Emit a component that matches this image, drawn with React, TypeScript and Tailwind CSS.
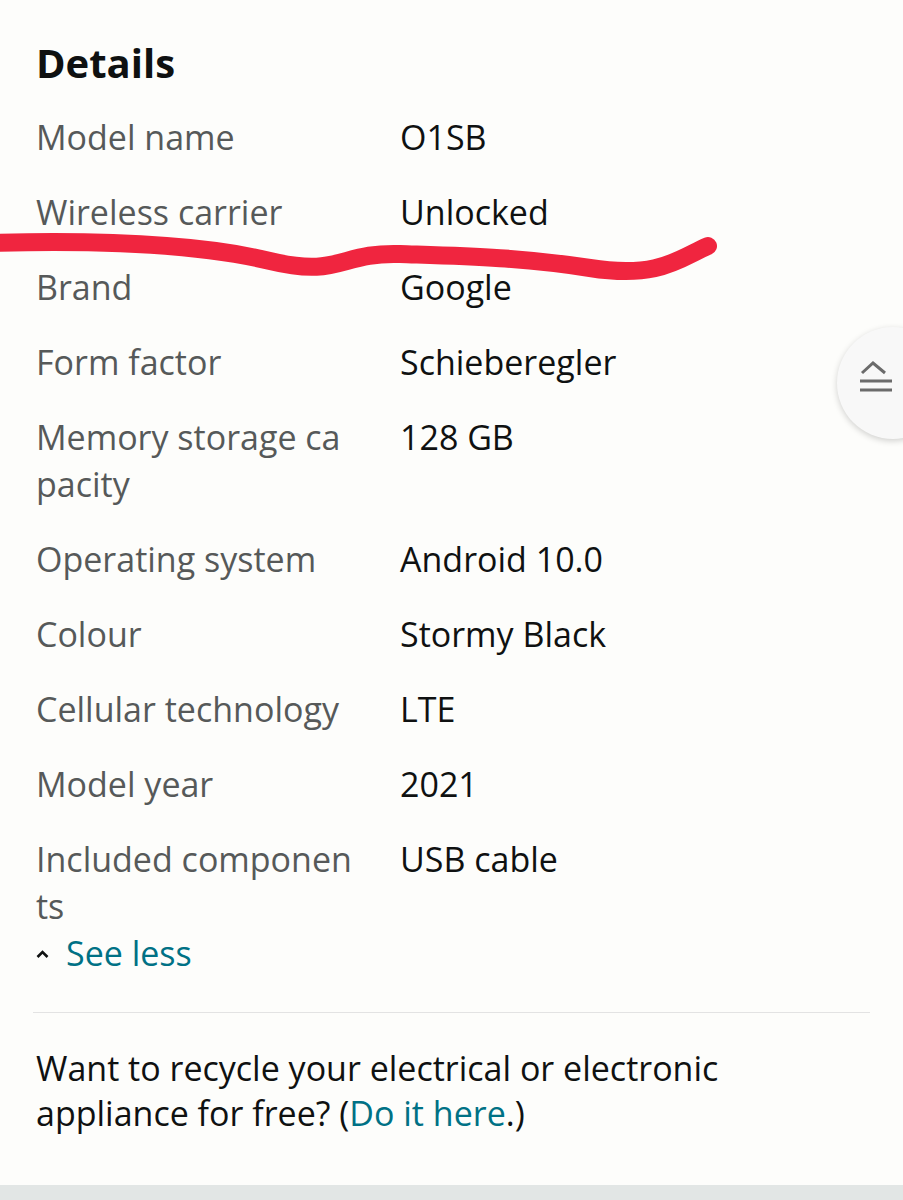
import React from 'react'

const details: [string, string][] = [
  ['Model name', 'O1SB'],
  ['Wireless carrier', 'Unlocked'],
  ['Brand', 'Google'],
  ['Form factor', 'Schieberegler'],
  ['Memory storage capacity', '128 GB'],
  ['Operating system', 'Android 10.0'],
  ['Colour', 'Stormy Black'],
  ['Cellular technology', 'LTE'],
  ['Model year', '2021'],
  ['Included components', 'USB cable'],
]

const App = () => {
  return (
    <div
      className="relative flex min-h-[1200px] w-[903px] flex-col overflow-hidden bg-[#fdfdfb] text-[#0f1111]"
      style={{ fontFamily: '"Open Sans", "Noto Sans", sans-serif' }}
    >
      <div className="pl-[36px] pr-[33px] pt-[36px]">
        <h2 className="text-[40px] font-bold leading-[54px] text-[#0f1111]">Details</h2>

        <div className="mt-[24px] grid grid-cols-[318px_1fr] gap-x-[46px] gap-y-[28px] text-[34px] leading-[47px]">
          {details.map(([label, value]) => (
            <React.Fragment key={label}>
              <div className="break-all text-[#565959]">{label}</div>
              <div className="text-[#0f1111]">{value}</div>
            </React.Fragment>
          ))}
        </div>

        <button className="flex items-center gap-[17px] text-[34px] leading-[47px] text-[#007185]">
          <svg width="13" height="10" viewBox="0 0 13 10" className="text-[#0f1111]">
            <path d="M1.5 8 L6.5 3 L11.5 8" fill="none" stroke="currentColor" strokeWidth="2.6" />
          </svg>
          See less
        </button>

        <div className="mt-[35px] -ml-[3px] h-px bg-[#e3e3e3]" />

        <p className="mt-[33px] text-[34px] leading-[45px] text-[#0f1111]">
          Want to recycle your electrical or electronic appliance for free? (<a className="text-[#007185]">Do it here</a>.)
        </p>
      </div>

      <div className="mt-auto h-[15px] bg-[#e2e6e5]" />

      {/* red marker stroke drawn over the list */}
      <svg className="pointer-events-none absolute left-0 top-0" width="903" height="320">
        <path
          d="M -10 243 C 100 240, 200 244, 270 261 S 340 252, 400 254 S 520 257, 590 268 S 680 258, 708 246"
          fill="none"
          stroke="#f0253f"
          strokeWidth="18"
          strokeLinecap="round"
        />
      </svg>

      {/* scroll to top */}
      <div className="absolute left-[837px] top-[327px] flex h-[112px] w-[112px] items-start rounded-full bg-[#f8f8f8] shadow-[0_2px_6px_rgba(0,0,0,0.18)]">
        <svg width="34" height="32" viewBox="0 0 34 32" className="ml-[22px] mt-[34px] text-[#6b6b6b]">
          <path d="M3 12 L14 2 L26 12" fill="none" stroke="currentColor" strokeWidth="3" />
          <path d="M1 20 H33 M1 29 H33" fill="none" stroke="currentColor" strokeWidth="3" />
        </svg>
      </div>
    </div>
  )
}

export default App
